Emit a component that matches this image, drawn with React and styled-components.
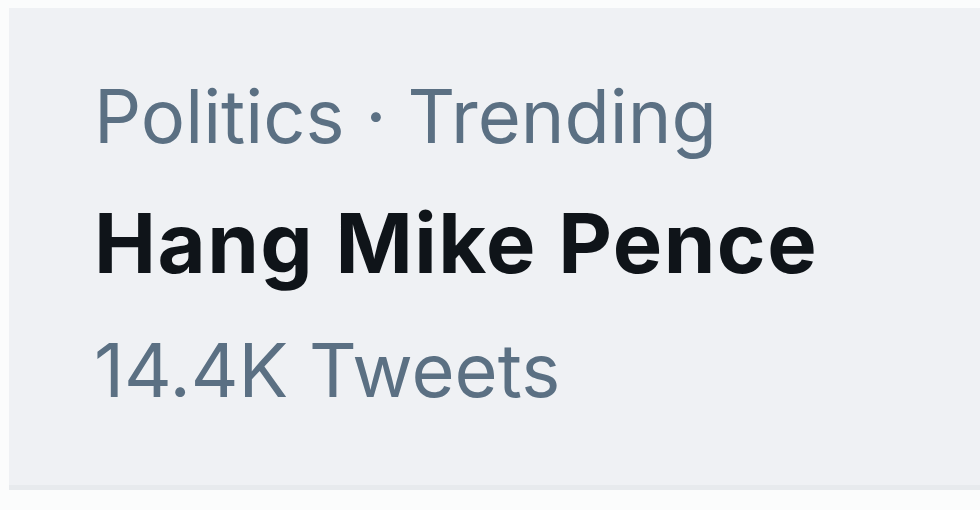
import React from "react";
import styled, { createGlobalStyle } from "styled-components";

const Global = createGlobalStyle`
  html, body { margin: 0; padding: 0; background: #ffffff; }
  body { font-family: Inter, "Noto Sans", sans-serif; }
`;

const Page = styled.div`
  width: 980px;
  height: 510px;
  padding: 8px 0 0 9px;
  box-sizing: border-box;
  background: #fbfcfc;
`;

const Card = styled.div`
  height: 482px;
  background: #eff1f4;
  border-bottom: 5px solid #e7eaed;
  padding: 71px 0 0 85px;
  box-sizing: border-box;
  display: flex;
  flex-direction: column;
`;

const Meta = styled.div`
  color: #5b7083;
  font-size: 74px;
  line-height: 1;
  margin-bottom: ${(p) => p.$mb || 0}px;
`;

const Title = styled.div`
  color: #0f1419;
  font-size: 83px;
  font-weight: 700;
  letter-spacing: 1.5px;
  line-height: 1;
  margin-bottom: 48px;
`;

export default function App() {
  return (
    <>
      <Global />
      <Page>
        <Card>
          <Meta $mb={49}>Politics · Trending</Meta>
          <Title>Hang Mike Pence</Title>
          <Meta>14.4K Tweets</Meta>
        </Card>
      </Page>
    </>
  );
}
